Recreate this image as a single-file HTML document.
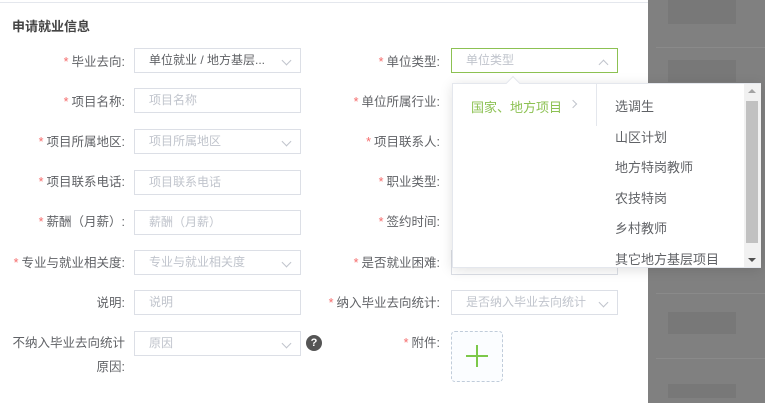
<!DOCTYPE html>
<html><head><meta charset="utf-8"><style>
*{box-sizing:border-box;margin:0;padding:0}
body{width:765px;height:403px;overflow:hidden;background:#fff;font-family:"Liberation Sans","Noto Sans CJK SC",sans-serif;font-size:12.5px;color:#606266;position:relative}
.a{position:absolute}
.lbl{position:absolute;text-align:right;white-space:nowrap;color:#606266;margin-top:-2px}
.lbl b{color:#f56c6c;font-weight:normal;margin-right:3px}
.in{position:absolute;height:25px;border:1px solid #dcdfe6;background:#fff;color:#c0c4cc;padding-left:14px;line-height:23px;white-space:nowrap;font-size:12px}
.ch{position:absolute;right:10px;top:8px;width:7px;height:7px;border-right:1px solid #c0c4cc;border-bottom:1px solid #c0c4cc;transform:rotate(45deg)}
.ov{position:absolute;left:648px;top:0;width:117px;height:403px;background:#808080}
.blk{position:absolute;background:#787878}
</style></head><body>
<div class="a" style="left:0;top:2px;width:648px;height:1px;background:#e4e7ed"></div>
<div class="a" style="left:12px;top:16px;font-size:13px;font-weight:bold;color:#444">申请就业信息</div>

<div class="lbl" style="right:640px;top:53px"><b>*</b>毕业去向:</div>
<div class="in" style="left:134px;top:48px;width:167px;color:#606266">单位就业 / 地方基层...<span class="ch"></span></div>
<div class="lbl" style="right:640px;top:93px"><b>*</b>项目名称:</div>
<div class="in" style="left:134px;top:88px;width:167px">项目名称</div>
<div class="lbl" style="right:640px;top:133px"><b>*</b>项目所属地区:</div>
<div class="in" style="left:134px;top:129px;width:167px">项目所属地区<span class="ch"></span></div>
<div class="lbl" style="right:640px;top:173px"><b>*</b>项目联系电话:</div>
<div class="in" style="left:134px;top:170px;width:167px">项目联系电话</div>
<div class="lbl" style="right:640px;top:213px"><b>*</b>薪酬（月薪）:</div>
<div class="in" style="left:134px;top:210px;width:167px">薪酬（月薪）</div>
<div class="lbl" style="right:640px;top:254px"><b>*</b>专业与就业相关度:</div>
<div class="in" style="left:134px;top:250px;width:167px">专业与就业相关度<span class="ch"></span></div>
<div class="lbl" style="right:640px;top:294px">说明:</div>
<div class="in" style="left:134px;top:290px;width:167px">说明</div>
<div class="lbl" style="right:640px;top:334px">不纳入毕业去向统计</div>
<div class="lbl" style="right:640px;top:358px">原因:</div>
<div class="in" style="left:134px;top:331px;width:167px">原因<span class="ch"></span></div>
<div class="a" style="left:306px;top:335px;width:16px;height:16px;border-radius:50%;background:#555;color:#fff;font-size:11px;font-weight:bold;text-align:center;line-height:16px">?</div>

<div class="lbl" style="right:325px;top:53px"><b>*</b>单位类型:</div>
<div class="in" style="left:451px;top:48px;width:167px;border-color:#8cc152">单位类型<span class="ch" style="transform:rotate(225deg);top:12px"></span></div>
<div class="lbl" style="right:325px;top:93px"><b>*</b>单位所属行业:</div>
<div class="lbl" style="right:325px;top:133px"><b>*</b>项目联系人:</div>
<div class="lbl" style="right:325px;top:173px"><b>*</b>职业类型:</div>
<div class="lbl" style="right:325px;top:213px"><b>*</b>签约时间:</div>
<div class="lbl" style="right:325px;top:254px"><b>*</b>是否就业困难:</div>
<div class="in" style="left:451px;top:250px;width:167px"></div>
<div class="lbl" style="right:325px;top:294px"><b>*</b>纳入毕业去向统计:</div>
<div class="in" style="left:451px;top:290px;width:167px">是否纳入毕业去向统计<span class="ch"></span></div>
<div class="lbl" style="right:325px;top:334px"><b>*</b>附件:</div>
<div class="a" style="left:451px;top:331px;width:52px;height:51px;border:1px dashed #c0ccda;border-radius:4px;background:#fbfdff"></div>
<div class="a" style="left:466px;top:355px;width:22px;height:2px;background:#7cc84a"></div>
<div class="a" style="left:476px;top:345px;width:2px;height:22px;background:#7cc84a"></div>

<div class="ov">
<div class="blk" style="left:20px;top:0;width:68px;height:24px"></div>
<div class="blk" style="left:20px;top:60px;width:68px;height:22px"></div>
<div class="blk" style="left:20px;top:312px;width:68px;height:22px"></div>
<div class="blk" style="left:20px;top:384px;width:68px;height:14px"></div>
<div class="a" style="left:8px;top:47px;width:109px;height:1px;background:#8a8a8a"></div>
<div class="a" style="left:8px;top:293px;width:109px;height:1px;background:#8a8a8a"></div>
<div class="a" style="left:8px;top:358px;width:109px;height:1px;background:#8a8a8a"></div>
</div>

<div class="a" style="left:452px;top:83px;width:309px;height:185px;background:#fff;border:1px solid #e4e7ed;box-shadow:0 2px 12px rgba(0,0,0,.12)">
<div class="a" style="left:55px;top:-6px;width:10px;height:10px;background:#fff;border-left:1px solid #e4e7ed;border-top:1px solid #e4e7ed;transform:rotate(45deg)"></div>
<div class="a" style="left:18px;top:13px;color:#8cc152;font-size:13px">国家、地方项目</div>
<div class="a" style="left:117px;top:17px;width:6px;height:6px;border-right:1px solid #c0c4cc;border-top:1px solid #c0c4cc;transform:rotate(45deg)"></div>
<div class="a" style="left:143px;top:0;width:1px;height:42px;background:#e4e7ed"></div>
<div class="a" style="left:162px;top:8px;color:#606266;font-size:13px;line-height:30.5px">选调生<br>山区计划<br>地方特岗教师<br>农技特岗<br>乡村教师<br>其它地方基层项目</div>
<div class="a" style="left:291px;top:0;width:17px;height:183px;background:#f1f1f1"></div>
<div class="a" style="left:293px;top:17px;width:12px;height:142px;background:#c1c1c1"></div>
<div class="a" style="left:295px;top:5px;width:0;height:0;border:4px solid transparent;border-bottom-color:#a3a3a3;border-top:0"></div>
<div class="a" style="left:295px;top:174px;width:0;height:0;border:4px solid transparent;border-top-color:#505050;border-bottom:0"></div>
</div>
</body></html>
